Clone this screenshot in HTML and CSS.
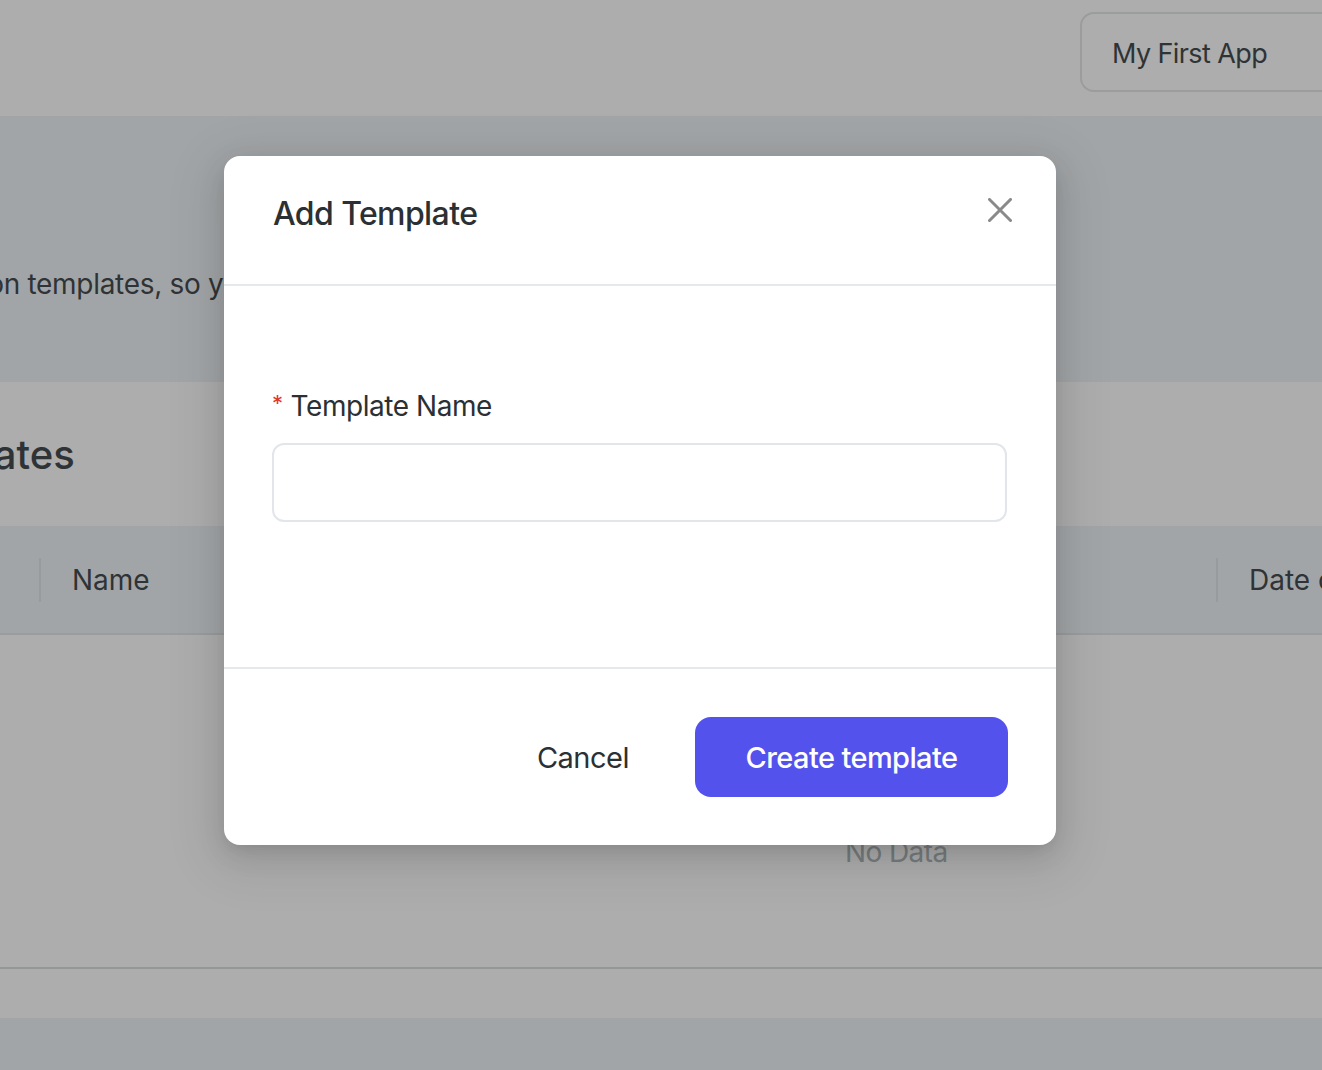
FILE: index.html
```html
<!DOCTYPE html>
<html lang="en">
<head>
<meta charset="utf-8">
<title>Add Template</title>
<link rel="stylesheet" href="styles.css">
</head>
<body>
<div class="page">
  <header class="topbar">
    <button class="app-switch">My First App</button>
  </header>
  <section class="hero">
    <p class="hero-text">Create notification templates, so you can reuse content across channels.</p>
  </section>
  <section class="list-head">
    <h1 class="list-title">Templates</h1>
  </section>
  <section class="table">
    <div class="thead">
      <div class="th th-first"></div>
      <div class="th th-name">Name</div>
      <div class="th th-date">Date created</div>
    </div>
    <div class="tbody">
      <span class="empty">No Data</span>
    </div>
  </section>
  <div class="pager"></div>
  <div class="page-foot"></div>
</div>

<div class="mask"></div>

<div class="modal" role="dialog" aria-labelledby="modal-title">
  <div class="modal-header">
    <h2 class="modal-title" id="modal-title">Add Template</h2>
    <button class="modal-close" aria-label="Close">
      <svg width="24" height="24" viewBox="0 0 24 24"><path d="M1.5 1.5 L22.5 22.5 M22.5 1.5 L1.5 22.5" stroke="#8a8a8a" stroke-width="3" stroke-linecap="square" fill="none"/></svg>
    </button>
  </div>
  <div class="modal-body">
    <label class="field-label" for="tpl-name"><span class="req">*</span>Template Name</label>
    <input class="field-input" id="tpl-name" type="text">
  </div>
  <div class="modal-footer">
    <button class="btn btn-text">Cancel</button>
    <button class="btn btn-primary">Create template</button>
  </div>
</div>
</body>
</html>
```

FILE: styles.css
```css
* { box-sizing: border-box; }
html, body { margin: 0; padding: 0; }
body {
  width: 1322px;
  height: 1070px;
  overflow: hidden;
  font-family: Inter, "Noto Sans", sans-serif;
  background: #ffffff;
  position: relative;
}

.page {
  display: flex;
  flex-direction: column;
  height: 1070px;
}

.topbar {
  height: 116px;
  background: #ffffff;
  display: flex;
  align-items: flex-start;
  padding-top: 12px;
  padding-left: 1080px;
}
.app-switch {
  height: 80px;
  width: 320px;
  flex: none;
  border: 2px solid #e3e6e6;
  border-radius: 14px;
  background: #ffffff;
  font-family: inherit;
  font-size: 27px;
  letter-spacing: -0.6px;
  color: #3a3f44;
  text-align: left;
  padding: 2px 0 0 30px;
}

.hero {
  height: 266px;
  background: #f0f3f8;
  display: flex;
  align-items: center;
  overflow: hidden;
}
.hero-text {
  margin: 70px 0 0 -218px;
  white-space: nowrap;
  font-size: 28px;
  letter-spacing: -0.3px;
  color: #3a3f44;
}

.list-head {
  height: 144px;
  background: #ffffff;
  display: flex;
  align-items: center;
  overflow: hidden;
}
.list-title {
  margin: 0 0 0 -123px;
  font-size: 40px;
  font-weight: 500;
  color: #3a3f44;
  white-space: nowrap;
}

.table { display: flex; flex-direction: column; }
.thead {
  height: 109px;
  background: #f0f3f8;
  border-bottom: 2px solid #e3e6e8;
  display: grid;
  grid-template-columns: 39px 1177px 1fr;
  align-items: center;
}
.th {
  font-size: 28px;
  color: #3a3f44;
  white-space: nowrap;
  height: 44px;
  line-height: 44px;
}
.th-name, .th-date {
  border-left: 2px solid #dfe3e7;
  padding-left: 31px;
}
.tbody {
  height: 334px;
  border-bottom: 2px solid #d7dcdd;
  display: flex;
  justify-content: flex-start;
  align-items: flex-end;
  padding-left: 845px;
  padding-bottom: 98px;
}
.empty {
  font-size: 28px;
  letter-spacing: -0.6px;
  color: #abb2b6;
}
.pager { height: 49px; background: #ffffff; }
.page-foot { flex: 1; background: #f0f3f8; }

.mask {
  position: absolute;
  inset: 0;
  background: rgba(30, 33, 30, 0.37);
}

.modal {
  position: absolute;
  left: 224px;
  top: 156px;
  width: 832px;
  height: 689px;
  background: #ffffff;
  border-radius: 16px;
  box-shadow: 0 12px 48px 16px rgba(0, 0, 0, 0.08), 0 9px 28px rgba(0, 0, 0, 0.1), 0 6px 16px -8px rgba(0, 0, 0, 0.12);
  display: flex;
  flex-direction: column;
}
.modal-header {
  height: 130px;
  border-bottom: 2px solid #e6e9ec;
  display: flex;
  align-items: center;
  justify-content: space-between;
  padding: 0 44px 14px 49px;
}
.modal-title {
  margin: 0;
  font-size: 32px;
  font-weight: 500;
  letter-spacing: -0.6px;
  color: #2b3034;
}
.modal-close {
  border: 0;
  background: none;
  padding: 0;
  width: 24px;
  height: 24px;
  display: flex;
  margin-bottom: 6px;
}

.modal-body {
  height: 383px;
  border-bottom: 2px solid #e6e9ec;
  padding: 102px 48px 0 48px;
  display: flex;
  flex-direction: column;
}
.field-label {
  font-size: 28px;
  letter-spacing: -0.45px;
  color: #2b3034;
  line-height: 36px;
  display: flex;
  align-items: flex-start;
}
.req {
  color: #e5352b;
  font-size: 22px;
  margin-right: 8px;
  line-height: 30px;
}
.field-input {
  margin-top: 19px;
  height: 79px;
  width: 735px;
  border: 2px solid #e2e6ea;
  border-radius: 12px;
  background: #fff;
  font-family: inherit;
  font-size: 28px;
  padding: 0 22px;
}

.modal-footer {
  flex: 1;
  display: flex;
  justify-content: flex-end;
  align-items: flex-start;
  padding: 48px 48px 0 0;
  gap: 18px;
}
.btn {
  height: 80px;
  border: 0;
  font-family: inherit;
  font-size: 29px;
  border-radius: 16px;
  cursor: pointer;
}
.btn-text {
  background: none;
  color: #2b3034;
  letter-spacing: -0.5px;
  padding: 0 48px;
}
.btn-primary {
  width: 313px;
  background: #5352ed;
  color: #ffffff;
  font-weight: 500;
  letter-spacing: -0.6px;
}
```
